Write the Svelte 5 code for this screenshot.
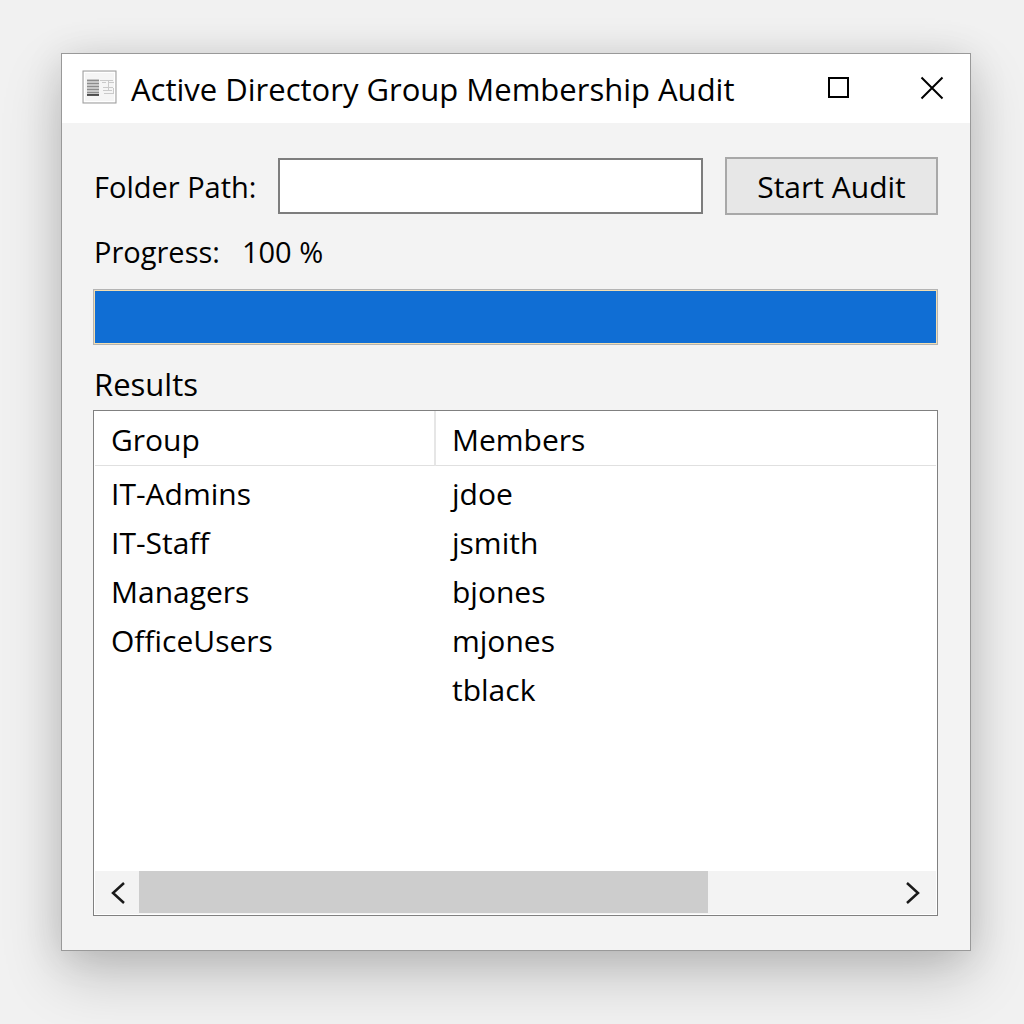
<script>
  let folderPath = $state('');
  const progress = 100;
  const rows = [
    { group: 'IT-Admins', member: 'jdoe' },
    { group: 'IT-Staff', member: 'jsmith' },
    { group: 'Managers', member: 'bjones' },
    { group: 'OfficeUsers', member: 'mjones' },
    { group: '', member: 'tblack' }
  ];
</script>

<div class="desktop">
  <main class="window">
    <header class="titlebar">
      <svg class="app-icon" width="36" height="36" viewBox="0 0 36 36" aria-hidden="true">
        <rect x="1" y="1" width="33" height="32" fill="#f5f5f5" stroke="#999" />
        <rect x="2.500" y="2.500" width="30" height="29" fill="none" stroke="#fff" />
        <rect x="5" y="9" width="12" height="16" fill="#c8c8c8" />
        <path d="M5 10.500h12M5 13.500h12M5 16.500h12M5 19.500h12M5 22.500h12" stroke="#8d8d8d" />
        <path d="M5 25h12" stroke="#222" stroke-width="1.500" />
        <path d="M18 10.500h13M20 12.500h4M26 12.500h6M21 17.500h10M21 20.500h9M22 23.500h9M26.500 11v10M31.500 18v6" fill="none" stroke="#cacaca" />
      </svg>
      <h1>Active Directory Group Membership Audit</h1>
      <div class="controls">
        <button type="button" aria-label="Maximize">
          <svg width="24" height="24" viewBox="0 0 24 24"><rect x="2" y="2" width="19" height="19" fill="none" stroke="#000" stroke-width="2" /></svg>
        </button>
        <button type="button" aria-label="Close">
          <svg width="24" height="24" viewBox="0 0 24 24"><path d="M1.500 1.500l21 21M22.500 1.500l-21 21" fill="none" stroke="#000" stroke-width="2" /></svg>
        </button>
      </div>
    </header>

    <div class="content">
      <form class="path-row" onsubmit={(e) => e.preventDefault()}>
        <label for="path">Folder Path:</label>
        <input id="path" type="text" bind:value={folderPath} />
        <button class="start" type="submit">Start Audit</button>
      </form>

      <div class="status"><span>Progress:</span><span>{progress} %</span></div>
      <div class="bar" role="progressbar" aria-label="Progress" aria-valuenow={progress} aria-valuemin="0" aria-valuemax="100">
        <div class="fill" style="width: {progress}%"></div>
      </div>

      <h2>Results</h2>
      <section class="results">
        <table>
          <thead>
            <tr><th scope="col">Group</th><th scope="col">Members</th></tr>
          </thead>
          <tbody>
            {#each rows as row}
              <tr><td>{row.group}</td><td>{row.member}</td></tr>
            {/each}
          </tbody>
        </table>
        <div class="scroll">
          <button type="button" aria-label="Scroll left">
            <svg width="16" height="24" viewBox="0 0 16 24"><path d="M15 2L4 12l11 10" fill="none" stroke="#1a1a1a" stroke-width="2.500" /></svg>
          </button>
          <div class="track"><div class="thumb"></div></div>
          <button type="button" aria-label="Scroll right">
            <svg width="16" height="24" viewBox="0 0 16 24"><path d="M1 2l11 10L1 22" fill="none" stroke="#1a1a1a" stroke-width="2.500" /></svg>
          </button>
        </div>
      </section>
    </div>
  </main>
</div>

<style>
  :global(body) {
    background: #f1f1f1;
  }
  .desktop {
    box-sizing: border-box;
    min-height: 100vh;
    display: flex;
    padding: 53px 53px 73px 61px;
    color: #000;
    font-family: 'Segoe UI', 'Open Sans', 'Noto Sans', sans-serif;
    font-size: 30px;
    line-height: 40px;
  }
  .window {
    flex: 1;
    min-width: 0;
    display: flex;
    flex-direction: column;
    background: #f3f3f3;
    border: 1px solid #999;
    box-shadow: 0 24px 56px rgba(0, 0, 0, 0.2), 0 4px 36px rgba(0, 0, 0, 0.1);
  }
  .titlebar {
    display: flex;
    align-items: center;
    height: 69px;
    padding: 0 8px 0 20px;
    background: #fff;
  }
  .app-icon {
    flex: none;
    margin: 0 13px 2px 0;
  }
  h1,
  h2 {
    margin: 0;
    font-weight: 400;
  }
  h1 {
    flex: 1;
    font-size: 31px;
    line-height: 40px;
    white-space: nowrap;
  }
  .controls {
    display: flex;
    gap: 33px;
    padding-bottom: 2px;
  }
  button {
    font: inherit;
    color: inherit;
  }
  .controls button,
  .scroll button {
    display: flex;
    align-items: center;
    justify-content: center;
    padding: 0;
    border: 0;
    background: none;
  }
  .controls button {
    width: 60px;
    height: 60px;
  }
  .content {
    flex: 1;
    display: flex;
    flex-direction: column;
    padding: 34px 32px 34px 31px;
  }
  .path-row {
    display: flex;
    align-items: center;
    gap: 22px;
  }
  label,
  .status,
  h2 {
    padding-left: 1px;
  }
  label,
  .status {
    font-size: 29px;
  }
  label {
    padding-top: 2px;
    white-space: nowrap;
  }
  input {
    box-sizing: border-box;
    flex: 1;
    min-width: 0;
    height: 56px;
    padding: 0 12px;
    border: 2px solid #7d7d7d;
    border-radius: 0;
    background: #fff;
    font: inherit;
  }
  .start {
    box-sizing: border-box;
    width: 213px;
    height: 58px;
    padding: 2px 0 0;
    border: 2px solid #a8a8a8;
    background: #e7e7e7;
    white-space: nowrap;
  }
  .status {
    display: flex;
    gap: 22px;
    margin: 17px 0;
  }
  .bar {
    box-sizing: border-box;
    height: 56px;
    border: 1px solid #b4b4b4;
    padding: 1px;
    background: #f3deb0;
  }
  .fill {
    height: 100%;
    background: #106ed4;
  }
  h2 {
    margin: 19px 0 6px;
    font-size: 31px;
    line-height: 40px;
  }
  .results {
    flex: 1;
    display: flex;
    flex-direction: column;
    justify-content: space-between;
    border: 1px solid #808080;
    background: #fff;
    padding: 0 1px 1px;
  }
  table {
    width: 100%;
    border-collapse: separate;
    border-spacing: 0;
    table-layout: fixed;
  }
  th,
  td {
    box-sizing: border-box;
    padding: 4px 0 5px 16px;
    text-align: left;
    font-weight: 400;
  }
  th {
    height: 55px;
    padding: 9px 0 5px 16px;
    border-bottom: 1px solid #e0e0e0;
  }
  th:first-child {
    width: 341px;
    border-right: 2px solid #e6e6e6;
  }
  td {
    height: 49px;
  }
  tbody tr:first-child td {
    height: 53px;
    padding-top: 8px;
  }
  .scroll {
    display: flex;
    height: 43px;
    background: #f3f3f3;
  }
  .scroll button {
    width: 44px;
  }
  .track {
    flex: 1;
    display: flex;
  }
  .thumb {
    flex: 0 0 75.500%;
    margin-bottom: 1px;
    background: #cdcdcd;
  }
</style>
